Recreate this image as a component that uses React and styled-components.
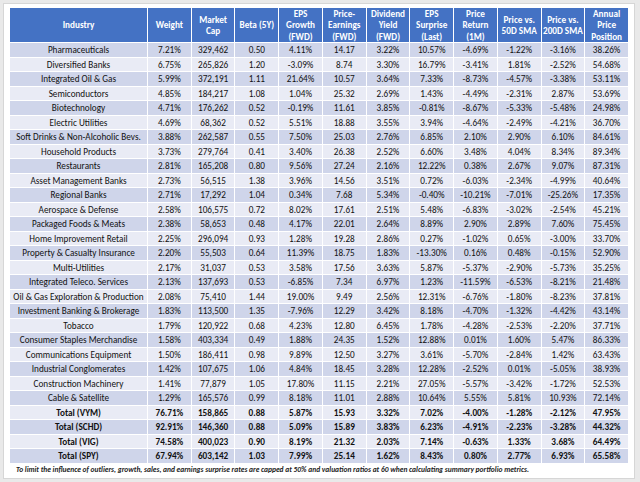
import React from 'react'
import styled, { createGlobalStyle } from 'styled-components'

const FONT = `Calibri, Carlito, Lato, "Noto Sans", sans-serif`

const GlobalStyle = createGlobalStyle`
  html, body {
    margin: 0;
    padding: 0;
    background: #e9e9e9;
  }
  body {
    width: 640px;
    height: 482px;
    overflow: hidden;
    font-family: ${FONT};
  }
`

const headers = [
    ['Industry'],
    ['Weight'],
    ['Market', 'Cap'],
    ['Beta (5Y)'],
    ['EPS', 'Growth', '(FWD)'],
    ['Price-', 'Earnings', '(FWD)'],
    ['Dividend', 'Yield', '(FWD)'],
    ['EPS', 'Surprise', '(Last)'],
    ['Price', 'Return', '(1M)'],
    ['Price vs.', '50D SMA'],
    ['Price vs.', '200D SMA'],
    ['Annual', 'Price', 'Position'],
]

const rows = [
    ['Pharmaceuticals', '7.21%', '329,462', '0.50', '4.11%', '14.17', '3.22%', '10.57%', '-4.69%', '-1.22%', '-3.16%', '38.26%'],
    ['Diversified Banks', '6.75%', '265,826', '1.20', '-3.09%', '8.74', '3.30%', '16.79%', '-3.41%', '1.81%', '-2.52%', '54.68%'],
    ['Integrated Oil & Gas', '5.99%', '372,191', '1.11', '21.64%', '10.57', '3.64%', '7.33%', '-8.73%', '-4.57%', '-3.38%', '53.11%'],
    ['Semiconductors', '4.85%', '184,217', '1.08', '1.04%', '25.32', '2.69%', '1.43%', '-4.49%', '-2.31%', '2.87%', '53.69%'],
    ['Biotechnology', '4.71%', '176,262', '0.52', '-0.19%', '11.61', '3.85%', '-0.81%', '-8.67%', '-5.33%', '-5.48%', '24.98%'],
    ['Electric Utilities', '4.69%', '68,362', '0.52', '5.51%', '18.88', '3.55%', '3.94%', '-4.64%', '-2.49%', '-4.21%', '36.70%'],
    ['Soft Drinks & Non-Alcoholic Bevs.', '3.88%', '262,587', '0.55', '7.50%', '25.03', '2.76%', '6.85%', '2.10%', '2.90%', '6.10%', '84.61%'],
    ['Household Products', '3.73%', '279,764', '0.41', '3.40%', '26.38', '2.52%', '6.60%', '3.48%', '4.04%', '8.34%', '89.34%'],
    ['Restaurants', '2.81%', '165,208', '0.80', '9.56%', '27.24', '2.16%', '12.22%', '0.38%', '2.67%', '9.07%', '87.31%'],
    ['Asset Management Banks', '2.73%', '56,515', '1.38', '3.96%', '14.56', '3.51%', '0.72%', '-6.03%', '-2.34%', '-4.99%', '40.64%'],
    ['Regional Banks', '2.71%', '17,292', '1.04', '0.34%', '7.68', '5.34%', '-0.40%', '-10.21%', '-7.01%', '-25.26%', '17.35%'],
    ['Aerospace & Defense', '2.58%', '106,575', '0.72', '8.02%', '17.61', '2.51%', '5.48%', '-6.83%', '-3.02%', '-2.54%', '45.21%'],
    ['Packaged Foods & Meats', '2.38%', '58,653', '0.48', '4.17%', '22.01', '2.64%', '8.89%', '2.90%', '2.89%', '7.60%', '75.45%'],
    ['Home Improvement Retail', '2.25%', '296,094', '0.93', '1.28%', '19.28', '2.86%', '0.27%', '-1.02%', '0.65%', '-3.00%', '33.70%'],
    ['Property & Casualty Insurance', '2.20%', '55,503', '0.64', '11.39%', '18.75', '1.83%', '-13.30%', '0.16%', '0.48%', '-0.15%', '52.90%'],
    ['Multi-Utilities', '2.17%', '31,037', '0.53', '3.58%', '17.56', '3.63%', '5.87%', '-5.37%', '-2.90%', '-5.73%', '35.25%'],
    ['Integrated Teleco. Services', '2.13%', '137,693', '0.53', '-6.85%', '7.34', '6.97%', '1.23%', '-11.59%', '-6.53%', '-8.21%', '21.48%'],
    ['Oil & Gas Exploration & Production', '2.08%', '75,410', '1.44', '19.00%', '9.49', '2.56%', '12.31%', '-6.76%', '-1.80%', '-8.23%', '37.81%'],
    ['Investment Banking & Brokerage', '1.83%', '113,500', '1.35', '-7.96%', '12.29', '3.42%', '8.18%', '-4.70%', '-1.32%', '-4.42%', '43.14%'],
    ['Tobacco', '1.79%', '120,922', '0.68', '4.23%', '12.80', '6.45%', '1.78%', '-4.28%', '-2.53%', '-2.20%', '37.71%'],
    ['Consumer Staples Merchandise', '1.58%', '403,334', '0.49', '1.88%', '24.35', '1.52%', '12.88%', '0.01%', '1.60%', '5.47%', '86.33%'],
    ['Communications Equipment', '1.50%', '186,411', '0.98', '9.89%', '12.50', '3.27%', '3.61%', '-5.70%', '-2.84%', '1.42%', '63.43%'],
    ['Industrial Conglomerates', '1.42%', '107,675', '1.06', '4.84%', '18.45', '3.28%', '12.28%', '-2.52%', '0.01%', '-5.05%', '38.93%'],
    ['Construction Machinery', '1.41%', '77,879', '1.05', '17.80%', '11.15', '2.21%', '27.05%', '-5.57%', '-3.42%', '-1.72%', '52.53%'],
    ['Cable & Satellite', '1.29%', '165,576', '0.99', '8.18%', '11.01', '2.88%', '10.64%', '5.55%', '5.81%', '10.93%', '72.14%'],
]

const totals = [
    ['Total (VYM)', '76.71%', '158,865', '0.88', '5.87%', '15.93', '3.32%', '7.02%', '-4.00%', '-1.28%', '-2.12%', '47.95%'],
    ['Total (SCHD)', '92.91%', '146,360', '0.88', '5.09%', '15.89', '3.83%', '6.23%', '-4.91%', '-2.23%', '-3.28%', '44.32%'],
    ['Total (VIG)', '74.58%', '400,023', '0.90', '8.19%', '21.32', '2.03%', '7.14%', '-0.63%', '1.33%', '3.68%', '64.49%'],
    ['Total (SPY)', '67.94%', '603,142', '1.03', '7.99%', '25.14', '1.62%', '8.43%', '0.80%', '2.77%', '6.93%', '65.58%'],
]

// white sheet holding the table and the footnote
const Card = styled.div`
    margin: 3px;
    width: 632px;
    height: 476px;
    box-sizing: border-box;
    background: #fff;
    border: 1px solid #d6d6d6;
    padding: 4px 6px 0 6px;
`

const Table = styled.div`
    width: 618px;
    display: flex;
    flex-direction: column;
    gap: 1px;
    background: #fff;
`

const Row = styled.div`
    display: grid;
    grid-template-columns: 137px repeat(11, 1fr);
    column-gap: 1px;
    height: ${p => (p.$header ? '34px' : '13.5px')};
`

const HeadCell = styled.div`
    background: #4472c4;
    color: #fff;
    font-weight: 700;
    font-size: 9.2px;
    line-height: 11.3px;
    display: flex;
    align-items: center;
    justify-content: center;
    text-align: center;
    white-space: nowrap;
`

const Cell = styled.div`
    background: ${p => (p.$dark ? '#cfd5ea' : '#e9ebf5')};
    color: #111;
    font-size: 9.2px;
    font-weight: ${p => (p.$total ? 700 : 400)};
    line-height: 13.5px;
    text-align: center;
    white-space: nowrap;
    overflow: hidden;
`

const Note = styled.div`
    font-size: 7.5px;
    font-style: italic;
    font-weight: 700;
    color: #222;
    padding: 2px 0 0 6px;
    white-space: nowrap;
`

function DataRow({ values, dark, total }) {
    return (
        <Row>
            {values.map((v, i) => (
                <Cell key={i} $dark={dark} $total={total}>{v}</Cell>
            ))}
        </Row>
    )
}

export default function App() {
    return (
        <>
            <GlobalStyle />
            <Card>
                <Table>
                    <Row $header>
                        {headers.map((h, i) => (
                            <HeadCell key={i}>
                                <span>
                                    {h.map((line, j) => (
                                        <React.Fragment key={j}>
                                            {j > 0 && <br />}
                                            {line}
                                        </React.Fragment>
                                    ))}
                                </span>
                            </HeadCell>
                        ))}
                    </Row>
                    {rows.map((r, i) => (
                        <DataRow key={r[0]} values={r} dark={i % 2 === 0} />
                    ))}
                    {totals.map((r, i) => (
                        <DataRow key={r[0]} values={r} dark={(rows.length + i) % 2 === 0} total />
                    ))}
                </Table>
                <Note>
                    To limit the influence of outliers, growth, sales, and earnings surprise rates are capped at 50% and valuation ratios at 60 when calculating summary portfolio metrics.
                </Note>
            </Card>
        </>
    )
}
